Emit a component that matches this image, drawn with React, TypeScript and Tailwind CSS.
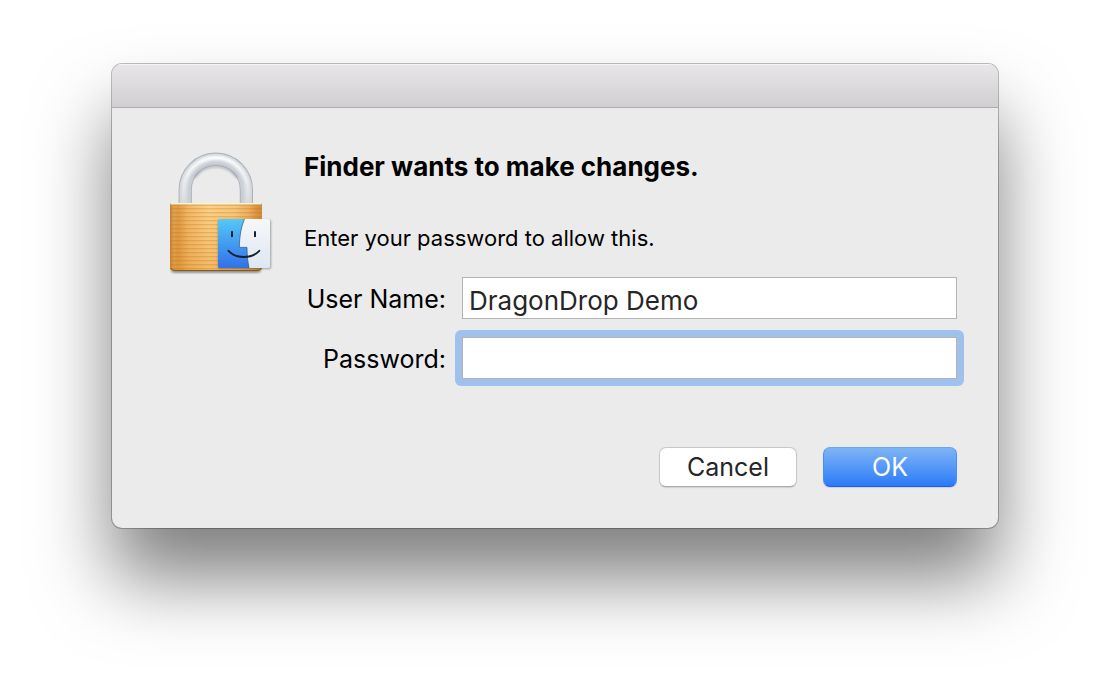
import { useState } from "react";

function LockIcon() {
  const ridges = Array.from({ length: 16 }, (_, i) => 58 + i * 4);
  return (
    <svg viewBox="0 0 106 126" className="h-[126px] w-[106px] shrink-0" aria-hidden="true">
      <defs>
        <linearGradient id="brass" x1="0" x2="1" y1="0" y2="0">
          <stop offset="0" stopColor="#c48034" />
          <stop offset="0.04" stopColor="#e3a250" />
          <stop offset="0.09" stopColor="#de9c48" />
          <stop offset="0.2" stopColor="#f3ba6a" />
          <stop offset="0.42" stopColor="#fdd28a" />
          <stop offset="0.7" stopColor="#f9c87c" />
          <stop offset="0.86" stopColor="#edb060" />
          <stop offset="0.94" stopColor="#d99444" />
          <stop offset="1" stopColor="#cf8a3c" />
        </linearGradient>
        <linearGradient id="brassShade" x1="0" x2="0" y1="0" y2="1">
          <stop offset="0" stopColor="#e08a20" stopOpacity="0" />
          <stop offset="1" stopColor="#d98416" stopOpacity="0.3" />
        </linearGradient>
        <linearGradient id="finderBlue" x1="0" x2="0" y1="0" y2="1">
          <stop offset="0" stopColor="#56c8f7" />
          <stop offset="0.5" stopColor="#429df0" />
          <stop offset="1" stopColor="#3370e8" />
        </linearGradient>
        <linearGradient id="finderWhite" x1="0" x2="0" y1="0" y2="1">
          <stop offset="0" stopColor="#f7f7f8" />
          <stop offset="1" stopColor="#dde7f3" />
        </linearGradient>
        <linearGradient id="gloss" x1="0" x2="0" y1="0" y2="1">
          <stop offset="0" stopColor="#fff" stopOpacity="0.95" />
          <stop offset="0.6" stopColor="#fff" stopOpacity="0.5" />
          <stop offset="1" stopColor="#fff" stopOpacity="0.1" />
        </linearGradient>
        <filter id="soft" x="-20%" y="-20%" width="140%" height="140%">
          <feGaussianBlur stdDeviation="1" />
        </filter>
        <clipPath id="finderClip">
          <rect x="50" y="69" width="52" height="49" rx="1.5" />
        </clipPath>
      </defs>

      <g fill="none">
        <path d="M17.2 54V39.8a30.6 30.6 0 0 1 61.2 0V54" stroke="#a9aeb7" strokeWidth="13.2" />
        <path d="M17.2 54V39.8a30.6 30.6 0 0 1 61.2 0V54" stroke="#d3d7dc" strokeWidth="11.4" />
        <path d="M21.6 54V39.8a26.2 26.2 0 0 1 52.4 0V54" stroke="#b7bcc5" strokeWidth="2" opacity="0.5" filter="url(#soft)" />
        <path d="M15.8 54V39.8a32 32 0 0 1 64 0V54" stroke="url(#gloss)" strokeWidth="4" filter="url(#soft)" />
        <path d="M26.5 27.5a26 26 0 0 1 42.6 0" stroke="#8b9199" strokeWidth="2" opacity="0.6" filter="url(#soft)" />
      </g>

      <path d="M3 119h90v2q-1 2-4 2H7q-3 0-4-2z" fill="#555" opacity="0.6" filter="url(#soft)" />
      <path d="M2 54q0-1 1-1h90q1 0 1 1v63q0 4-5 4H7q-5 0-5-4z" fill="url(#brass)" />
      <path d="M2 54q0-1 1-1h90q1 0 1 1v63q0 4-5 4H7q-5 0-5-4z" fill="url(#brassShade)" />
      {ridges.map((y) => (
        <g key={y}>
          <path d={`M2 ${y}.5h92`} stroke="#b9701c" strokeWidth="1" opacity="0.28" />
          <path d={`M2 ${y + 1}.5h92`} stroke="#b9701c" strokeWidth="1" opacity="0.1" />
        </g>
      ))}
      <path d="M2.5 53.8h91" stroke="#fff3cc" strokeWidth="1.4" />
      <path d="M2.5 55.2h91" stroke="#c98b3a" strokeWidth="1" opacity="0.6" />
      <path d="M2.5 118q1 2.5 4.5 2.5h82q3.5 0 4.5-2.5" fill="none" stroke="#8b571b" strokeWidth="1" />

      <rect x="50" y="70" width="53" height="49" rx="2" fill="#444" opacity="0.45" filter="url(#soft)" />
      <g clipPath="url(#finderClip)">
        <rect x="50" y="69" width="52" height="49" fill="url(#finderBlue)" />
        <path d="M76.5 69C73 77 71.5 86 71.3 97.4H79Q78.8 108 81 118H102V69z" fill="url(#finderWhite)" />
        <path d="M76.5 69C73 77 71.5 86 71.3 97.4H79Q78.8 108 81 118" fill="none" stroke="#1d4e86" strokeWidth="0.9" opacity="0.75" />
      </g>
      <g fill="none" stroke="#17202b">
        <path d="M64 81.3v5.7M87 81.3v5.7" strokeWidth="2" />
        <path d="M60.5 100.8C68 109 83.5 109 91.3 100.8" strokeWidth="1.9" strokeLinecap="round" />
      </g>
    </svg>
  );
}

const field =
  "h-[42px] w-full min-w-0 border border-[#b4b4b4] bg-white px-1.5 pt-1 text-[26px] leading-8 text-[#262626] outline-none";

export default function App() {
  const [userName, setUserName] = useState("DragonDrop Demo");
  const [password, setPassword] = useState("");

  return (
    <main className="min-h-screen overflow-hidden bg-white px-28 py-16 font-['Inter','Liberation_Sans',sans-serif] text-black">
      <section
        role="dialog"
        aria-labelledby="dialog-title"
        className="overflow-hidden rounded-[10px] bg-[#ebebeb] shadow-[0_0_0_1px_rgba(0,0,0,0.25),0_50px_76px_rgba(0,0,0,0.5)]"
      >
        <header className="h-11 border-b border-[#aeacae] bg-linear-to-b from-[#e8e6e8] to-[#d1cfd1] shadow-[inset_0_1px_0_#f6f5f6]" />
        <form className="flex gap-[30px] pt-[42px] pr-[41px] pb-[41px] pl-14" onSubmit={(e) => e.preventDefault()}>
          <LockIcon />
          <div className="min-w-0 grow">
            <h1 id="dialog-title" className="text-[26px] leading-[34px] font-bold">
              Finder wants to make changes.
            </h1>
            <p className="mt-[38px] text-[22px] leading-8">Enter your password to allow this.</p>
            <div className="mt-[23px] grid grid-cols-[142px_1fr] items-center gap-x-4 gap-y-[18px] text-[25px] leading-8 whitespace-nowrap">
              <label htmlFor="user-name" className="pt-0.5 text-right">
                User Name:
              </label>
              <input
                id="user-name"
                type="text"
                className={field}
                value={userName}
                onChange={(e) => setUserName(e.target.value)}
              />
              <label htmlFor="password" className="pt-0.5 text-right">
                Password:
              </label>
              <div className="-m-[7px] rounded-md bg-[#a0c1ee] p-[7px]">
                <input
                  id="password"
                  type="password"
                  className={`${field} block`}
                  value={password}
                  onChange={(e) => setPassword(e.target.value)}
                />
              </div>
            </div>
            <div className="mt-[68px] flex justify-end gap-[26px] text-[25px] leading-8">
              <button
                type="button"
                className="h-10 w-[138px] rounded-[7px] border border-[#c8c8c8] border-b-[#acacac] bg-white text-[#262626] shadow-[0_1px_1px_rgba(0,0,0,0.12)]"
              >
                Cancel
              </button>
              <button
                type="submit"
                className="h-10 w-[134px] rounded-[7px] border border-[#4a90ee] border-t-[#6aa6ef] border-b-[#1f5cf0] bg-linear-to-b from-[#7db4f5] to-[#2a7af7] text-white shadow-[0_1px_1px_rgba(0,0,0,0.12)]"
              >
                OK
              </button>
            </div>
          </div>
        </form>
      </section>
    </main>
  );
}
